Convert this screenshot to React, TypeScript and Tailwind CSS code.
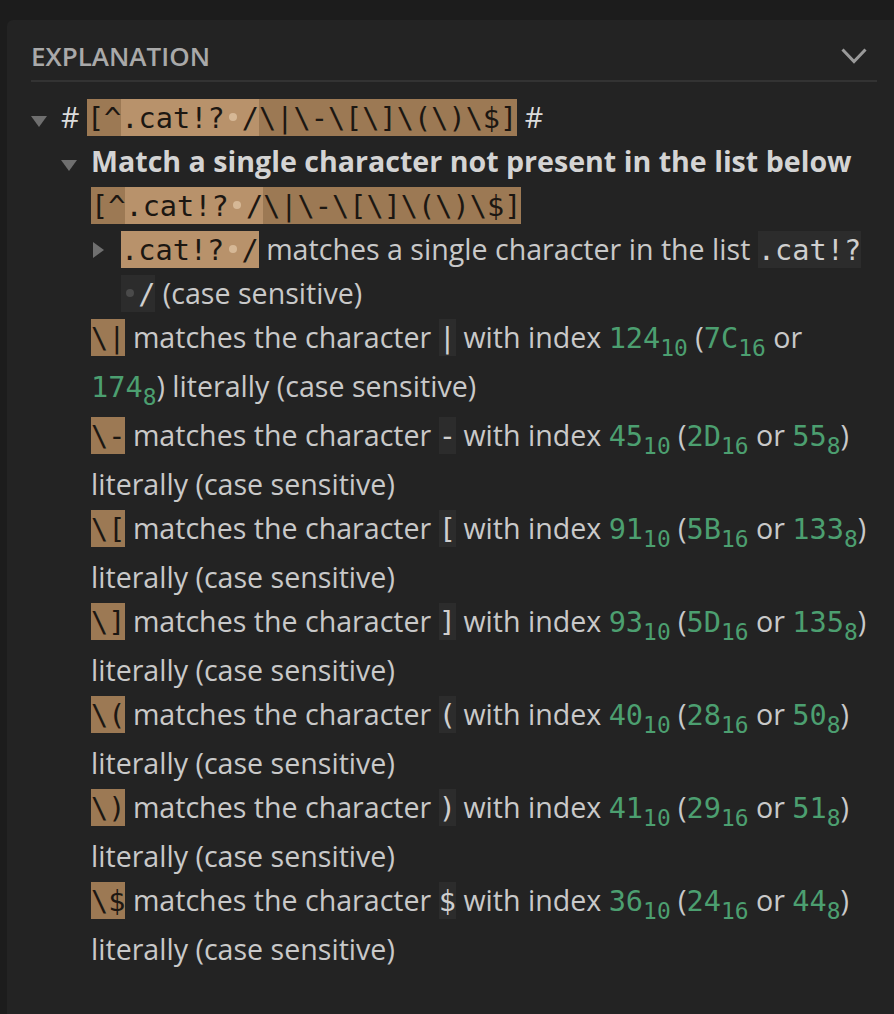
import React from "react";

const MONO = "font-['DejaVu_Sans_Mono',monospace]";

function Dot({ dark }: { dark?: boolean }) {
  return (
    <span className="inline-block w-[17.2px] text-center">
      <span
        className={`inline-block h-[8px] w-[8px] rounded-full align-[7px] ${dark ? "bg-[#4a4a4a]" : "bg-[#d6b896]"}`}
      />
    </span>
  );
}

function Hl({ children, light }: { children: React.ReactNode; light?: boolean }) {
  return (
    <span
      className={`${MONO} text-[28.6px] leading-[36px] pt-[2px] pb-[1px] text-[#1c1712] ${light ? "bg-[#b8926b]" : "bg-[#9c7954]"}`}
    >
      {children}
    </span>
  );
}

function Code({ children }: { children: React.ReactNode }) {
  return (
    <span className={`${MONO} text-[28.6px] leading-[36px] pt-[2px] pb-[1px] bg-[#2c2c2c] text-[#cfcfcf]`}>
      {children}
    </span>
  );
}

function Num({ children }: { children: React.ReactNode }) {
  return <span className={`${MONO} text-[28.6px] leading-[36px] text-[#4c9f70]`}>{children}</span>;
}

function Sub({ children }: { children: React.ReactNode }) {
  return (
    <span className={`${MONO} text-[22.9px] leading-[31px] align-[-8px] text-[#4c9f70]`}>{children}</span>
  );
}

function DownTri() {
  return (
    <svg width="16" height="11" viewBox="0 0 16 11" className="block">
      <path d="M0 0 L16 0 L8 11 Z" fill="#6f6f6f" />
    </svg>
  );
}

function RightTri() {
  return (
    <svg width="11" height="16" viewBox="0 0 11 16" className="block">
      <path d="M0 0 L11 8 L0 16 Z" fill="#6f6f6f" />
    </svg>
  );
}

function FullPattern() {
  return (
    <span className="whitespace-nowrap">
      <Hl>[^</Hl>
      <Hl light>
        .cat!?
        <Dot />/
      </Hl>
      <Hl>{"\\|\\-\\[\\]\\(\\)\\$]"}</Hl>
    </span>
  );
}

function CharLeaf({ ch, dec, hex, oct }: { ch: string; dec: string; hex: string; oct: string }) {
  return (
    <div>
      <Hl>{"\\" + ch}</Hl>
      {" "}
      {"matches the character"}
      {" "}
      <Code>{ch}</Code>
      {" "}
      {"with index"}
      {" "}
      <Num>{dec}</Num>
      <Sub>10</Sub>
      {" "}
      {"("}
      <Num>{hex}</Num>
      <Sub>16</Sub>
      {" "}
      {"or"}
      {" "}
      <Num>{oct}</Num>
      <Sub>8</Sub>
      {")"}
      {" "}
      {"literally (case sensitive)"}
    </div>
  );
}

export default function App() {
  return (
    <div className="min-h-screen bg-[#1c1c1c] pt-5 pl-[7px] font-['Open_Sans',sans-serif]">
      <div className="min-h-[994px] rounded-tl-[6px] bg-[#232323] pl-6 pr-[17px]">
        {/* header */}
        <div className="flex items-center justify-between border-b-2 border-[#333333] pt-[19px] pb-[7px]">
          <span className="text-[26px] font-semibold leading-[34px] text-[#a9a9a9]">EXPLANATION</span>
          <svg width="26" height="16" viewBox="0 0 26 16" className="mr-[10px]">
            <path d="M1.5 1.5 L13 13.5 L24.5 1.5" fill="none" stroke="#9a9a9a" strokeWidth="3" />
          </svg>
        </div>

        {/* tree */}
        <div className="mt-[13px] text-[28.6px] leading-[44px] text-[#c9c9c9]">
          {/* level 0 */}
          <div className="flex">
            <div className="w-[30px] shrink-0 pt-[21px]">
              <DownTri />
            </div>
            <div className="min-w-0 flex-1">
              <div className="text-[#dcdcdc]">
                # <FullPattern /> #
              </div>
              {/* level 1 */}
              <div className="flex">
                <div className="w-[30px] shrink-0 pt-[21px]">
                  <DownTri />
                </div>
                <div className="min-w-0 flex-1">
                  <div>
                    <span className="font-bold text-[#d4d4d4]">
                      Match a single character not present in the list below
                    </span>{" "}
                    <FullPattern />
                  </div>
                  {/* level 2 toggle node */}
                  <div className="flex">
                    <div className="w-[30px] shrink-0 pt-[15px] pl-[2px]">
                      <RightTri />
                    </div>
                    <div className="min-w-0 flex-1">
                      <Hl light>
                        .cat!?
                        <Dot />/
                      </Hl>
                      {" "}
                      {"matches a single character in the list"}
                      {" "}
                      <Code>.cat!?</Code>
                      <wbr />
                      <Code>
                        <Dot dark />/
                      </Code>
                      {" "}
                      {"(case sensitive)"}
                    </div>
                  </div>
                  {/* leaves */}
                  <CharLeaf ch="|" dec="124" hex="7C" oct="174" />
                  <CharLeaf ch="-" dec="45" hex="2D" oct="55" />
                  <CharLeaf ch="[" dec="91" hex="5B" oct="133" />
                  <CharLeaf ch="]" dec="93" hex="5D" oct="135" />
                  <CharLeaf ch="(" dec="40" hex="28" oct="50" />
                  <CharLeaf ch=")" dec="41" hex="29" oct="51" />
                  <CharLeaf ch="$" dec="36" hex="24" oct="44" />
                </div>
              </div>
            </div>
          </div>
        </div>
      </div>
    </div>
  );
}
